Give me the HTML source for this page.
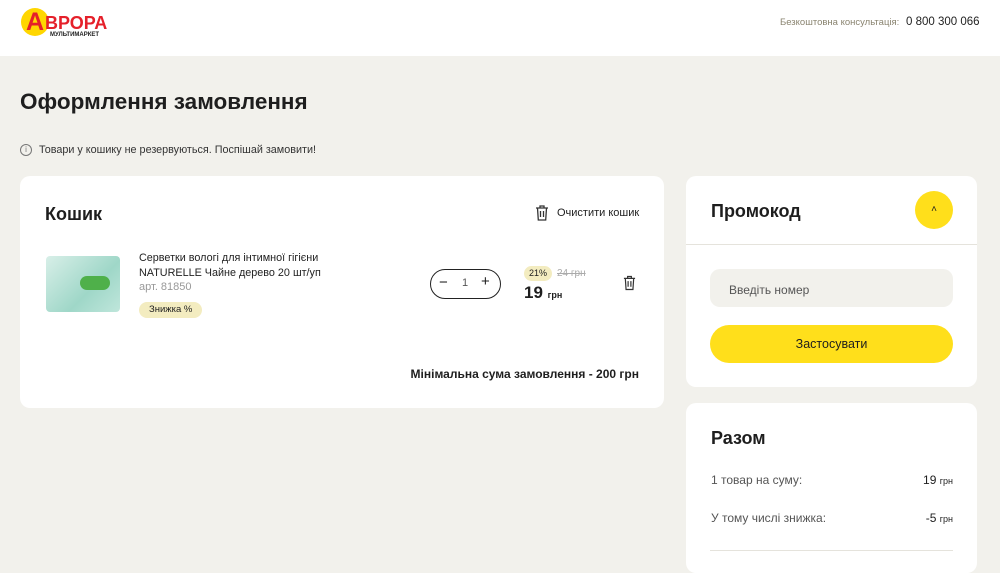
<!DOCTYPE html>
<html><head><meta charset="utf-8"><style>
*{box-sizing:border-box;margin:0;padding:0}
body{width:1000px;height:552px;overflow:hidden;background:#f2f1ec;font-family:"Liberation Sans",sans-serif;color:#1e1e1e;position:relative}
.hdr{position:absolute;left:0;top:0;width:1000px;height:56px;background:#fff}
.abs{position:absolute;white-space:nowrap}
.card{position:absolute;background:#fff;border-radius:10px}
</style></head><body>
<div class="hdr">
 <div class="abs" style="left:21px;top:8px;width:28px;height:28px;border-radius:50%;background:#ffd600"></div>
 <div class="abs" style="left:26px;top:8px;font-size:25px;font-weight:bold;color:#e5202a;letter-spacing:-1px">А</div>
 <div class="abs" style="left:45px;top:13px;font-size:18px;font-weight:bold;color:#e5202a">ВРОРА</div>
 <div class="abs" style="left:50px;top:32px;font-size:6px;font-weight:bold;color:#222">МУЛЬТИМАРКЕТ</div>
 <div class="abs" style="left:780px;top:17px;font-size:9.5px;color:#8a8470">Безкоштовна консультація:</div>
 <div class="abs" style="left:906px;top:16px;font-size:11.5px;color:#222">0 800 300 066</div>
</div>
<div class="abs" style="left:20px;top:89px;font-size:22.5px;font-weight:bold">Оформлення замовлення</div>
<div class="abs" style="left:20px;top:144px;width:12px;height:12px;border:1px solid #777;border-radius:50%;font-size:8px;text-align:center;line-height:10px;color:#777">i</div>
<div class="abs" style="left:39px;top:144px;font-size:10.8px;color:#333">Товари у кошику не резервуються. Поспішай замовити!</div>

<div class="card" style="left:20px;top:176px;width:644px;height:232px">
 <div class="abs" style="left:25px;top:28px;font-size:18px;font-weight:bold">Кошик</div>
 <svg class="abs" style="left:515px;top:29px" width="14" height="16" viewBox="0 0 14 16" fill="none" stroke="#333" stroke-width="1.3"><path d="M1 3h12M5 3V1h4v2M2.5 3l.8 12h7.4l.8-12M5.5 6v6M8.5 6v6"/></svg>
 <div class="abs" style="left:537px;top:31px;font-size:11px">Очистити кошик</div>
 <div class="abs" style="left:26px;top:80px;width:74px;height:56px;background:linear-gradient(135deg,#d8efe8,#9fd7c8 60%,#bfe6db);border-radius:4px"></div>
 <div class="abs" style="left:60px;top:100px;width:30px;height:14px;background:#4fb04a;border-radius:7px"></div>
 <div class="abs" style="left:119px;top:75px;font-size:10.8px;line-height:15px;color:#222">Серветки вологі для інтимної гігієни<br>NATURELLE Чайне дерево 20 шт/уп</div>
 <div class="abs" style="left:119px;top:105px;font-size:11px;color:#999">арт. 81850</div>
 <div class="abs" style="left:119px;top:126px;height:16px;padding:0 10px;background:#f3ecc0;border-radius:8px;font-size:9.5px;line-height:16px">Знижка %</div>
 <div class="abs" style="left:410px;top:93px;width:71px;height:30px;border:1.3px solid #222;border-radius:15px"></div>
 <div class="abs" style="left:419px;top:98px;font-size:15px">−</div>
 <div class="abs" style="left:442px;top:101px;font-size:11px;color:#555">1</div>
 <div class="abs" style="left:461px;top:97px;font-size:15px">+</div>
 <div class="abs" style="left:504px;top:90px;width:28px;height:15px;background:#f3ecc0;border-radius:8px;font-size:9px;text-align:center;line-height:15px">21%</div>
 <div class="abs" style="left:537px;top:92px;font-size:10px;color:#aaa;text-decoration:line-through">24 грн</div>
 <div class="abs" style="left:504px;top:107px;font-size:17px;font-weight:bold">19 <span style="font-size:9px">грн</span></div>
 <svg class="abs" style="left:603px;top:99px" width="13" height="16" viewBox="0 0 14 16" fill="none" stroke="#333" stroke-width="1.3"><path d="M1 3h12M5 3V1h4v2M2.5 3l.8 12h7.4l.8-12M5.5 6v6M8.5 6v6"/></svg>
 <div class="abs" style="right:25px;top:191px;font-size:12px;font-weight:bold">Мінімальна сума замовлення - 200 грн</div>
</div>

<div class="card" style="left:686px;top:176px;width:291px;height:211px">
 <div class="abs" style="left:25px;top:25px;font-size:18px;font-weight:bold">Промокод</div>
 <div class="abs" style="left:229px;top:15px;width:38px;height:38px;border-radius:50%;background:#ffdf1b;text-align:center;line-height:38px;font-size:10px">˄</div>
 <div class="abs" style="left:0;top:68px;width:291px;height:1px;background:#e5e3dc"></div>
 <div class="abs" style="left:24px;top:93px;width:243px;height:38px;background:#f2f1ec;border-radius:10px;font-size:12px;color:#555;padding:14px 0 0 19px">Введіть номер</div>
 <div class="abs" style="left:24px;top:149px;width:243px;height:38px;background:#ffdf1b;border-radius:19px;font-size:12.5px;text-align:center;line-height:38px">Застосувати</div>
</div>

<div class="card" style="left:686px;top:403px;width:291px;height:170px">
 <div class="abs" style="left:25px;top:25px;font-size:18px;font-weight:bold">Разом</div>
 <div class="abs" style="left:25px;top:70px;font-size:12px;color:#555">1 товар на суму:</div>
 <div class="abs" style="right:24px;top:70px;font-size:12px">19 <span style="font-size:9px">грн</span></div>
 <div class="abs" style="left:25px;top:108px;font-size:12px;color:#555">У тому числі знижка:</div>
 <div class="abs" style="right:24px;top:108px;font-size:12px">-5 <span style="font-size:9px">грн</span></div>
 <div class="abs" style="left:24px;top:147px;width:243px;height:1px;background:#e5e3dc"></div>
</div>
</body></html>
